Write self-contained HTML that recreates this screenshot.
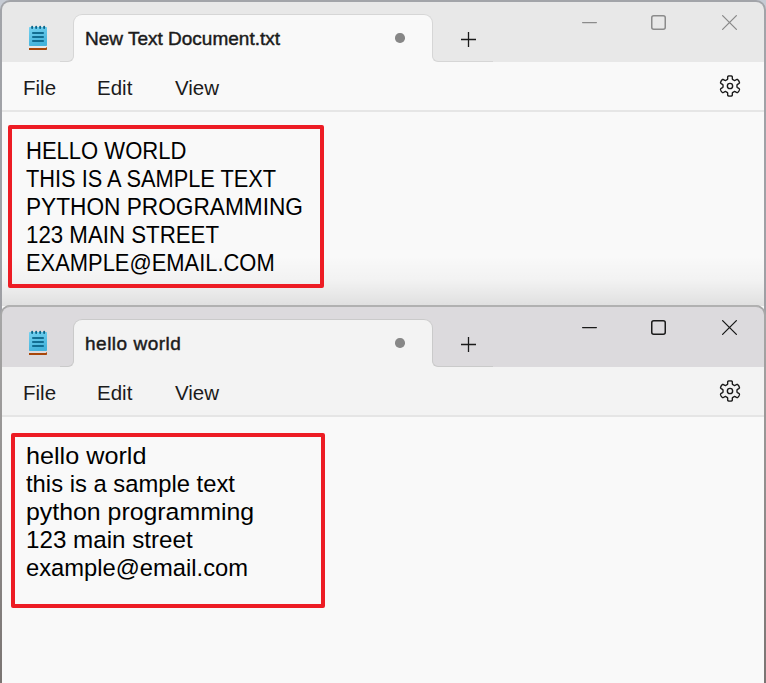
<!DOCTYPE html>
<html><head><meta charset="utf-8">
<style>
html,body{margin:0;padding:0;}
body{width:766px;height:683px;overflow:hidden;position:relative;background:#c6cbd4;font-family:"Liberation Sans",sans-serif;}
.abs{position:absolute;}
.win{position:absolute;left:0;width:766px;border-radius:10px 10px 0 0;overflow:hidden;}
.strip{position:absolute;left:2px;right:2px;height:60px;}
.tab{position:absolute;left:73px;width:358px;top:12px;height:48px;border:1px solid #d6d6d6;border-bottom:none;border-radius:9px 9px 0 0;}
.menu{position:absolute;left:2px;right:2px;height:48px;}
.sep{position:absolute;left:2px;right:2px;height:2px;}
.mi{position:absolute;font-size:20.5px;color:#1b1b1b;white-space:nowrap;}
.title{position:absolute;left:87px;font-size:19px;font-weight:normal;-webkit-text-stroke:0.45px #1b1b1b;color:#1b1b1b;white-space:nowrap;}
.txt{position:absolute;left:26px;font-size:24.5px;line-height:28px;color:#000;white-space:nowrap;}
.txt div{transform-origin:0 0;}
.box{position:absolute;z-index:1;border:4px solid #ed1c24;border-radius:2px;box-sizing:border-box;}
svg{position:absolute;overflow:visible;}
</style></head><body>

<!-- ============ WINDOW 1 ============ -->
<div class="win" style="top:0;height:683px;background:linear-gradient(#a2a4a9,#9a9a9e);">
  <div class="strip" style="top:2px;background:#e8e8e8;border-radius:8px 8px 0 0;"></div>
  <!-- tab -->
  <div class="tab" style="background:#f9f9f9;top:14px;"></div>
  <div class="abs" style="left:60px;top:44px;width:14px;height:18px;background:#f9f9f9"></div>
  <div class="abs" style="left:60px;top:44px;width:14px;height:18px;box-sizing:border-box;background:#e8e8e8;border-right:1px solid #d6d6d6;border-bottom:1px solid #d6d6d6;border-bottom-right-radius:6px;"></div>
  <div class="abs" style="left:432px;top:44px;width:62px;height:18px;background:#f9f9f9"></div>
  <div class="abs" style="left:432px;top:44px;width:62px;height:18px;box-sizing:border-box;background:#e8e8e8;border-left:1px solid #d6d6d6;border-bottom:1px solid #d6d6d6;border-bottom-left-radius:6px;"></div>
  <div class="abs" style="left:493px;top:44px;width:271px;height:18px;background:#e8e8e8"></div>
  <div class="abs" style="left:2px;top:62px;width:762px;height:48px;background:#f9f9f9;"></div>
  <div class="abs" style="left:2px;top:110px;width:762px;height:2px;background:#e6e6e6;"></div>
  <div class="abs" style="left:2px;top:112px;width:762px;height:600px;background:#f9f9f9;"></div>
  <svg style="left:27px;top:24px" width="22" height="28" viewBox="0 0 22 28">
  <defs><linearGradient id="npg" x1="0" y1="0" x2="0.3" y2="1"><stop offset="0" stop-color="#74d2f1"/><stop offset="1" stop-color="#45b3db"/></linearGradient></defs>
  <rect x="2" y="3" width="18" height="19" rx="0.8" fill="url(#npg)"/>
  <g fill="#0a6489"><rect x="4.2" y="1.8" width="1.9" height="3.2" rx="0.9"/><rect x="8.2" y="1.8" width="1.9" height="3.2" rx="0.9"/><rect x="12.2" y="1.8" width="1.9" height="3.2" rx="0.9"/><rect x="16.2" y="1.8" width="1.9" height="3.2" rx="0.9"/>
  <rect x="5.2" y="8.1" width="11.6" height="1.8"/><rect x="5.2" y="12.1" width="11.6" height="1.8"/><rect x="5.2" y="16.1" width="11.6" height="1.8"/></g>
  <path d="M2,24 H18.7 L20,23 V25.2 Q20,26 19.2,26 H2 Z" fill="#a84608"/>
</svg>
  <div class="title" style="top:28px;left:85px">New Text Document.txt</div>
  <div class="abs" style="left:395.2px;top:33.2px;width:9.4px;height:9.4px;border-radius:50%;background:#878787"></div>
  <svg style="left:461px;top:32px" width="15" height="15"><path d="M7.5,0 V15 M0,7.5 H15" stroke="#1a1a1a" stroke-width="1.3"/></svg>
  <svg style="left:582px;top:22px" width="15" height="2"><path d="M0.6,0.6 H14.4" stroke="#8b8b8b" stroke-width="1.2" stroke-linecap="round"/></svg>
  <svg style="left:651px;top:15px" width="15" height="15"><rect x="0.75" y="0.75" width="13.5" height="13.5" rx="2" fill="none" stroke="#8b8b8b" stroke-width="1.5"/></svg>
  <svg style="left:722px;top:15px" width="15" height="15"><path d="M0.6,0.6 L14.4,14.4 M14.4,0.6 L0.6,14.4" stroke="#8b8b8b" stroke-width="1.3" stroke-linecap="round"/></svg>
  <div class="mi" style="left:23px;top:76px">File</div>
  <div class="mi" style="left:97px;top:76px">Edit</div>
  <div class="mi" style="left:175px;top:76px">View</div>
  <svg style="left:730px;top:86px" width="1" height="1"><path d="M7.00,-0.00 L7.00,-0.18 L6.99,-0.37 L6.98,-0.55 L6.98,-0.73 L6.98,-0.92 L7.01,-1.11 L7.11,-1.32 L7.41,-1.58 L8.02,-1.92 L8.76,-2.35 L9.26,-2.74 L9.45,-3.07 L9.46,-3.35 L9.41,-3.61 L9.32,-3.86 L9.22,-4.11 L9.11,-4.35 L9.00,-4.59 L8.88,-4.82 L8.75,-5.05 L8.61,-5.28 L8.47,-5.50 L8.32,-5.72 L8.17,-5.93 L8.01,-6.14 L7.83,-6.34 L7.63,-6.52 L7.38,-6.65 L7.01,-6.65 L6.41,-6.41 L5.68,-5.98 L5.07,-5.63 L4.70,-5.50 L4.46,-5.51 L4.28,-5.58 L4.12,-5.68 L3.97,-5.77 L3.81,-5.87 L3.66,-5.97 L3.50,-6.06 L3.34,-6.15 L3.18,-6.24 L3.02,-6.32 L2.85,-6.41 L2.69,-6.50 L2.54,-6.62 L2.42,-6.82 L2.34,-7.21 L2.34,-7.91 L2.35,-8.76 L2.25,-9.39 L2.07,-9.72 L1.83,-9.87 L1.58,-9.95 L1.32,-10.00 L1.06,-10.04 L0.79,-10.07 L0.53,-10.09 L0.26,-10.10 L0.00,-10.10 L-0.26,-10.10 L-0.53,-10.09 L-0.79,-10.07 L-1.06,-10.04 L-1.32,-10.00 L-1.58,-9.95 L-1.83,-9.87 L-2.07,-9.72 L-2.25,-9.39 L-2.35,-8.76 L-2.34,-7.91 L-2.34,-7.21 L-2.42,-6.82 L-2.54,-6.62 L-2.69,-6.50 L-2.85,-6.41 L-3.02,-6.32 L-3.18,-6.24 L-3.34,-6.15 L-3.50,-6.06 L-3.66,-5.97 L-3.81,-5.87 L-3.97,-5.77 L-4.12,-5.68 L-4.28,-5.58 L-4.46,-5.51 L-4.70,-5.50 L-5.07,-5.63 L-5.68,-5.98 L-6.41,-6.41 L-7.01,-6.65 L-7.38,-6.65 L-7.63,-6.52 L-7.83,-6.34 L-8.01,-6.14 L-8.17,-5.93 L-8.32,-5.72 L-8.47,-5.50 L-8.61,-5.28 L-8.75,-5.05 L-8.88,-4.82 L-9.00,-4.59 L-9.11,-4.35 L-9.22,-4.11 L-9.32,-3.86 L-9.41,-3.61 L-9.46,-3.35 L-9.45,-3.07 L-9.26,-2.74 L-8.76,-2.35 L-8.02,-1.92 L-7.41,-1.58 L-7.11,-1.32 L-7.01,-1.11 L-6.98,-0.92 L-6.98,-0.73 L-6.98,-0.55 L-6.99,-0.37 L-7.00,-0.18 L-7.00,-0.00 L-7.00,0.18 L-6.99,0.37 L-6.98,0.55 L-6.98,0.73 L-6.98,0.92 L-7.01,1.11 L-7.11,1.32 L-7.41,1.58 L-8.02,1.92 L-8.76,2.35 L-9.26,2.74 L-9.45,3.07 L-9.46,3.35 L-9.41,3.61 L-9.32,3.86 L-9.22,4.11 L-9.11,4.35 L-9.00,4.59 L-8.88,4.82 L-8.75,5.05 L-8.61,5.28 L-8.47,5.50 L-8.32,5.72 L-8.17,5.93 L-8.01,6.14 L-7.83,6.34 L-7.63,6.52 L-7.38,6.65 L-7.01,6.65 L-6.41,6.41 L-5.68,5.98 L-5.07,5.63 L-4.70,5.50 L-4.46,5.51 L-4.28,5.58 L-4.12,5.68 L-3.97,5.77 L-3.81,5.87 L-3.66,5.97 L-3.50,6.06 L-3.34,6.15 L-3.18,6.24 L-3.02,6.32 L-2.85,6.41 L-2.69,6.50 L-2.54,6.62 L-2.42,6.82 L-2.34,7.21 L-2.34,7.91 L-2.35,8.76 L-2.25,9.39 L-2.07,9.72 L-1.83,9.87 L-1.58,9.95 L-1.32,10.00 L-1.06,10.04 L-0.79,10.07 L-0.53,10.09 L-0.26,10.10 L-0.00,10.10 L0.26,10.10 L0.53,10.09 L0.79,10.07 L1.06,10.04 L1.32,10.00 L1.58,9.95 L1.83,9.87 L2.07,9.72 L2.25,9.39 L2.35,8.76 L2.34,7.91 L2.34,7.21 L2.42,6.82 L2.54,6.62 L2.69,6.50 L2.85,6.41 L3.02,6.32 L3.18,6.24 L3.34,6.15 L3.50,6.06 L3.66,5.97 L3.81,5.87 L3.97,5.77 L4.12,5.68 L4.28,5.58 L4.46,5.51 L4.70,5.50 L5.07,5.63 L5.68,5.98 L6.41,6.41 L7.01,6.65 L7.38,6.65 L7.63,6.52 L7.83,6.34 L8.01,6.14 L8.17,5.93 L8.32,5.72 L8.47,5.50 L8.61,5.28 L8.75,5.05 L8.88,4.82 L9.00,4.59 L9.11,4.35 L9.22,4.11 L9.32,3.86 L9.41,3.61 L9.46,3.35 L9.45,3.07 L9.26,2.74 L8.76,2.35 L8.02,1.92 L7.41,1.58 L7.11,1.32 L7.01,1.11 L6.98,0.92 L6.98,0.73 L6.98,0.55 L6.99,0.37 L7.00,0.18 Z" fill="none" stroke="#1a1a1a" stroke-width="1.4" stroke-linejoin="round"/><circle cx="0" cy="0" r="2.65" fill="none" stroke="#1a1a1a" stroke-width="1.4"/></svg>
  <div class="txt" style="top:137px"><div style="transform:scaleX(0.899)">HELLO WORLD</div><div style="transform:scaleX(0.889)">THIS IS A SAMPLE TEXT</div><div style="transform:scaleX(0.925)">PYTHON PROGRAMMING</div><div style="transform:scaleX(0.909)">123 MAIN STREET</div><div style="transform:scaleX(0.894)">EXAMPLE@EMAIL.COM</div></div>
  <div class="box" style="left:8px;top:125px;width:316px;height:163px"></div>
</div>

<!-- shadow of window 2 -->
<div class="abs" style="left:2px;top:256px;width:762px;height:50px;background:linear-gradient(rgba(0,0,0,0),rgba(0,0,0,0.028) 48%,rgba(0,0,0,0.1));"></div>

<!-- ============ WINDOW 2 ============ -->
<div class="win" style="z-index:2;top:305px;height:378px;background:linear-gradient(#a8a8a8,#7a7472);">
  <div class="abs" style="left:7px;right:7px;top:0;height:2px;background:#b1b1b1"></div>
  <div class="strip" style="top:2px;background:#dcdadd;border-radius:8px 8px 0 0;"></div>
  <div class="tab" style="background:#f3f3f3;top:14px;border-color:#cacaca"></div>
  <div class="abs" style="left:60px;top:44px;width:14px;height:18px;background:#f3f3f3"></div>
  <div class="abs" style="left:60px;top:44px;width:14px;height:18px;box-sizing:border-box;background:#dcdadd;border-right:1px solid #cacaca;border-bottom:1px solid #cacaca;border-bottom-right-radius:6px;"></div>
  <div class="abs" style="left:432px;top:44px;width:62px;height:18px;background:#f3f3f3"></div>
  <div class="abs" style="left:432px;top:44px;width:62px;height:18px;box-sizing:border-box;background:#dcdadd;border-left:1px solid #cacaca;border-bottom:1px solid #cacaca;border-bottom-left-radius:6px;"></div>
  <div class="abs" style="left:493px;top:44px;width:271px;height:18px;background:#dcdadd"></div>
  <div class="abs" style="left:2px;top:62px;width:762px;height:48px;background:#f3f3f3;"></div>
  <div class="abs" style="left:2px;top:110px;width:762px;height:2px;background:#e5e5e5;"></div>
  <div class="abs" style="left:2px;top:112px;width:762px;height:600px;background:#f9f9f9;"></div>
  <svg style="left:27px;top:24px" width="22" height="28" viewBox="0 0 22 28">
  <defs><linearGradient id="npg2" x1="0" y1="0" x2="0.3" y2="1"><stop offset="0" stop-color="#74d2f1"/><stop offset="1" stop-color="#45b3db"/></linearGradient></defs>
  <rect x="2" y="3" width="18" height="19" rx="0.8" fill="url(#npg2)"/>
  <g fill="#0a6489"><rect x="4.2" y="1.8" width="1.9" height="3.2" rx="0.9"/><rect x="8.2" y="1.8" width="1.9" height="3.2" rx="0.9"/><rect x="12.2" y="1.8" width="1.9" height="3.2" rx="0.9"/><rect x="16.2" y="1.8" width="1.9" height="3.2" rx="0.9"/>
  <rect x="5.2" y="8.1" width="11.6" height="1.8"/><rect x="5.2" y="12.1" width="11.6" height="1.8"/><rect x="5.2" y="16.1" width="11.6" height="1.8"/></g>
  <path d="M2,24 H18.7 L20,23 V25.2 Q20,26 19.2,26 H2 Z" fill="#a84608"/>
</svg>
  <div class="title" style="top:28px;left:85px;letter-spacing:0.5px">hello world</div>
  <div class="abs" style="left:395.2px;top:33.2px;width:9.4px;height:9.4px;border-radius:50%;background:#878787"></div>
  <svg style="left:461px;top:32px" width="15" height="15"><path d="M7.5,0 V15 M0,7.5 H15" stroke="#1a1a1a" stroke-width="1.3"/></svg>
  <svg style="left:582px;top:22px" width="15" height="2"><path d="M0.6,0.6 H14.4" stroke="#1a1a1a" stroke-width="1.2" stroke-linecap="round"/></svg>
  <svg style="left:651px;top:15px" width="15" height="15"><rect x="0.75" y="0.75" width="13.5" height="13.5" rx="2" fill="none" stroke="#1a1a1a" stroke-width="1.5"/></svg>
  <svg style="left:722px;top:15px" width="15" height="15"><path d="M0.6,0.6 L14.4,14.4 M14.4,0.6 L0.6,14.4" stroke="#1a1a1a" stroke-width="1.3" stroke-linecap="round"/></svg>
  <div class="mi" style="left:23px;top:76px">File</div>
  <div class="mi" style="left:97px;top:76px">Edit</div>
  <div class="mi" style="left:175px;top:76px">View</div>
  <svg style="left:730px;top:86px" width="1" height="1"><path d="M7.00,-0.00 L7.00,-0.18 L6.99,-0.37 L6.98,-0.55 L6.98,-0.73 L6.98,-0.92 L7.01,-1.11 L7.11,-1.32 L7.41,-1.58 L8.02,-1.92 L8.76,-2.35 L9.26,-2.74 L9.45,-3.07 L9.46,-3.35 L9.41,-3.61 L9.32,-3.86 L9.22,-4.11 L9.11,-4.35 L9.00,-4.59 L8.88,-4.82 L8.75,-5.05 L8.61,-5.28 L8.47,-5.50 L8.32,-5.72 L8.17,-5.93 L8.01,-6.14 L7.83,-6.34 L7.63,-6.52 L7.38,-6.65 L7.01,-6.65 L6.41,-6.41 L5.68,-5.98 L5.07,-5.63 L4.70,-5.50 L4.46,-5.51 L4.28,-5.58 L4.12,-5.68 L3.97,-5.77 L3.81,-5.87 L3.66,-5.97 L3.50,-6.06 L3.34,-6.15 L3.18,-6.24 L3.02,-6.32 L2.85,-6.41 L2.69,-6.50 L2.54,-6.62 L2.42,-6.82 L2.34,-7.21 L2.34,-7.91 L2.35,-8.76 L2.25,-9.39 L2.07,-9.72 L1.83,-9.87 L1.58,-9.95 L1.32,-10.00 L1.06,-10.04 L0.79,-10.07 L0.53,-10.09 L0.26,-10.10 L0.00,-10.10 L-0.26,-10.10 L-0.53,-10.09 L-0.79,-10.07 L-1.06,-10.04 L-1.32,-10.00 L-1.58,-9.95 L-1.83,-9.87 L-2.07,-9.72 L-2.25,-9.39 L-2.35,-8.76 L-2.34,-7.91 L-2.34,-7.21 L-2.42,-6.82 L-2.54,-6.62 L-2.69,-6.50 L-2.85,-6.41 L-3.02,-6.32 L-3.18,-6.24 L-3.34,-6.15 L-3.50,-6.06 L-3.66,-5.97 L-3.81,-5.87 L-3.97,-5.77 L-4.12,-5.68 L-4.28,-5.58 L-4.46,-5.51 L-4.70,-5.50 L-5.07,-5.63 L-5.68,-5.98 L-6.41,-6.41 L-7.01,-6.65 L-7.38,-6.65 L-7.63,-6.52 L-7.83,-6.34 L-8.01,-6.14 L-8.17,-5.93 L-8.32,-5.72 L-8.47,-5.50 L-8.61,-5.28 L-8.75,-5.05 L-8.88,-4.82 L-9.00,-4.59 L-9.11,-4.35 L-9.22,-4.11 L-9.32,-3.86 L-9.41,-3.61 L-9.46,-3.35 L-9.45,-3.07 L-9.26,-2.74 L-8.76,-2.35 L-8.02,-1.92 L-7.41,-1.58 L-7.11,-1.32 L-7.01,-1.11 L-6.98,-0.92 L-6.98,-0.73 L-6.98,-0.55 L-6.99,-0.37 L-7.00,-0.18 L-7.00,-0.00 L-7.00,0.18 L-6.99,0.37 L-6.98,0.55 L-6.98,0.73 L-6.98,0.92 L-7.01,1.11 L-7.11,1.32 L-7.41,1.58 L-8.02,1.92 L-8.76,2.35 L-9.26,2.74 L-9.45,3.07 L-9.46,3.35 L-9.41,3.61 L-9.32,3.86 L-9.22,4.11 L-9.11,4.35 L-9.00,4.59 L-8.88,4.82 L-8.75,5.05 L-8.61,5.28 L-8.47,5.50 L-8.32,5.72 L-8.17,5.93 L-8.01,6.14 L-7.83,6.34 L-7.63,6.52 L-7.38,6.65 L-7.01,6.65 L-6.41,6.41 L-5.68,5.98 L-5.07,5.63 L-4.70,5.50 L-4.46,5.51 L-4.28,5.58 L-4.12,5.68 L-3.97,5.77 L-3.81,5.87 L-3.66,5.97 L-3.50,6.06 L-3.34,6.15 L-3.18,6.24 L-3.02,6.32 L-2.85,6.41 L-2.69,6.50 L-2.54,6.62 L-2.42,6.82 L-2.34,7.21 L-2.34,7.91 L-2.35,8.76 L-2.25,9.39 L-2.07,9.72 L-1.83,9.87 L-1.58,9.95 L-1.32,10.00 L-1.06,10.04 L-0.79,10.07 L-0.53,10.09 L-0.26,10.10 L-0.00,10.10 L0.26,10.10 L0.53,10.09 L0.79,10.07 L1.06,10.04 L1.32,10.00 L1.58,9.95 L1.83,9.87 L2.07,9.72 L2.25,9.39 L2.35,8.76 L2.34,7.91 L2.34,7.21 L2.42,6.82 L2.54,6.62 L2.69,6.50 L2.85,6.41 L3.02,6.32 L3.18,6.24 L3.34,6.15 L3.50,6.06 L3.66,5.97 L3.81,5.87 L3.97,5.77 L4.12,5.68 L4.28,5.58 L4.46,5.51 L4.70,5.50 L5.07,5.63 L5.68,5.98 L6.41,6.41 L7.01,6.65 L7.38,6.65 L7.63,6.52 L7.83,6.34 L8.01,6.14 L8.17,5.93 L8.32,5.72 L8.47,5.50 L8.61,5.28 L8.75,5.05 L8.88,4.82 L9.00,4.59 L9.11,4.35 L9.22,4.11 L9.32,3.86 L9.41,3.61 L9.46,3.35 L9.45,3.07 L9.26,2.74 L8.76,2.35 L8.02,1.92 L7.41,1.58 L7.11,1.32 L7.01,1.11 L6.98,0.92 L6.98,0.73 L6.98,0.55 L6.99,0.37 L7.00,0.18 Z" fill="none" stroke="#1a1a1a" stroke-width="1.4" stroke-linejoin="round"/><circle cx="0" cy="0" r="2.65" fill="none" stroke="#1a1a1a" stroke-width="1.4"/></svg>
  <div class="txt" style="top:137px"><div style="transform:scaleX(1.028)">hello world</div><div style="transform:scaleX(0.971)">this is a sample text</div><div style="transform:scaleX(1.015)">python programming</div><div style="transform:scaleX(0.987)">123 main street</div><div style="transform:scaleX(0.969)">example@email.com</div></div>
  <div class="box" style="left:11px;top:128px;width:314px;height:175px"></div>
</div>

</body></html>
